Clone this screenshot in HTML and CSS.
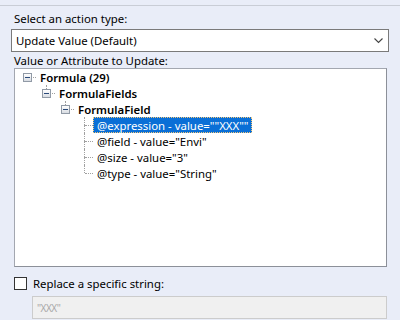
FILE: index.html
```html
<!DOCTYPE html>
<html>
<head>
<meta charset="utf-8">
<link rel="stylesheet" href="styles.css">
</head>
<body>
<div class="topbar"></div>
<div class="panel">
  <div class="label first">Select an action type:</div>
  <div class="select">
    <span class="select-text">Update Value (Default)</span>
    <svg class="chev" width="9" height="6" viewBox="0 0 9 6"><path d="M0.5 0.5 L4.5 4.5 L8.5 0.5" fill="none" stroke="#444" stroke-width="1.1"/></svg>
  </div>
  <div class="label second">Value or Attribute to Update:</div>
  <div class="tree">
    <div class="row lvl0">
      <span class="joint"><span class="hline"></span><span class="exp"><span class="minus"></span></span></span>
      <span class="node bold">Formula (29)</span>
    </div>
    <div class="row lvl1">
      <span class="joint up"><span class="hline"></span><span class="exp"><span class="minus"></span></span></span>
      <span class="node bold">FormulaFields</span>
    </div>
    <div class="row lvl2">
      <span class="joint up"><span class="hline"></span><span class="exp"><span class="minus"></span></span></span>
      <span class="node bold">FormulaField</span>
    </div>
    <div class="row lvl3">
      <span class="joint up down"><span class="hline"></span></span>
      <span class="node selected">@expression - value=""XXX""</span>
    </div>
    <div class="row lvl3">
      <span class="joint up down"><span class="hline"></span></span>
      <span class="node">@field - value="Envi"</span>
    </div>
    <div class="row lvl3">
      <span class="joint up down"><span class="hline"></span></span>
      <span class="node">@size - value="3"</span>
    </div>
    <div class="row lvl3">
      <span class="joint up"><span class="hline"></span></span>
      <span class="node">@type - value="String"</span>
    </div>
  </div>
  <div class="check-row">
    <span class="checkbox"></span>
    <span class="check-label">Replace a specific string:</span>
  </div>
  <div class="input disabled">"XXX"</div>
</div>
</body>
</html>
```
FILE: styles.css
```css
html, body {
  margin: 0;
  padding: 0;
}
body {
  width: 400px;
  height: 320px;
  overflow: hidden;
  background: #e9edf8;
  font-family: "Noto Sans", "Open Sans", sans-serif;
  font-size: 11.4px;
  color: #000;
}
.topbar {
  height: 5px;
  border-bottom: 1px solid #c9cdd6;
}
.panel {
  padding-left: 11px;
  display: flex;
  flex-direction: column;
}
.label {
  line-height: 15px;
  height: 15px;
  padding-left: 3px;
  white-space: nowrap;
}
.label.first {
  margin-top: 5px;
  margin-bottom: 3px;
}
.label.second {
  margin-top: 1px;
}
.select {
  box-sizing: border-box;
  width: 378px;
  height: 23px;
  border: 1px solid #7a7a7a;
  background: #fff;
  display: flex;
  align-items: center;
  justify-content: space-between;
  padding: 0 5px 0 4px;
}
.select-text {
  line-height: 16px;
}
.chev {
  display: block;
  margin-top: 1px;
}
.tree {
  box-sizing: border-box;
  margin-left: 3px;
  width: 373px;
  height: 199px;
  border: 1px solid #a3a7b0;
  border-right-color: #8c9099;
  border-bottom-color: #8c9099;
  background: #fff;
}
.row {
  height: 16px;
  display: flex;
  align-items: center;
  position: relative;
}
.lvl0 { padding-left: 8px; }
.lvl1 { padding-left: 27px; }
.lvl2 { padding-left: 46px; }
.lvl3 { padding-left: 65px; }
.joint {
  position: relative;
  width: 14px;
  height: 16px;
  flex: none;
}
.joint.up::before {
  content: "";
  position: absolute;
  left: 4px;
  top: 0;
  height: 8px;
  border-left: 1px dotted #a0a0a0;
}
.joint.down::after {
  content: "";
  position: absolute;
  left: 4px;
  top: 8px;
  height: 8px;
  border-left: 1px dotted #a0a0a0;
}
.hline {
  position: absolute;
  left: 5px;
  top: 8px;
  width: 8px;
  border-top: 1px dotted #a0a0a0;
}
.exp {
  position: absolute;
  left: 0;
  top: 4px;
  box-sizing: border-box;
  width: 9px;
  height: 9px;
  border: 1px solid #919aa6;
  background: linear-gradient(#ffffff, #d8dce2);
  z-index: 1;
}
.minus {
  position: absolute;
  left: 1px;
  top: 3px;
  width: 5px;
  height: 1px;
  background: #2a4a7a;
}
.node {
  line-height: 15px;
  height: 15px;
  padding: 0 3px;
  white-space: nowrap;
  box-sizing: border-box;
  border: 1px solid transparent;
  margin-left: -1px;
  display: flex;
  align-items: center;
}
.node.bold {
  font-weight: 600;
}
.node.selected {
  background: #0a6fd6;
  color: #fff;
  border: 1px dotted #f4c87a;
  height: 16px;
}
.check-row {
  display: flex;
  align-items: center;
  margin-top: 10px;
  height: 13px;
  padding-left: 3px;
}
.checkbox {
  box-sizing: border-box;
  width: 13px;
  height: 13px;
  border: 1px solid #333;
  background: #fff;
  flex: none;
}
.check-label {
  margin-left: 6px;
  line-height: 15px;
  white-space: nowrap;
}
.input {
  box-sizing: border-box;
  margin-top: 6px;
  margin-left: 21px;
  width: 355px;
  height: 23px;
  border: 1px solid #cccccc;
  background: #f0f0f0;
  color: #a8a8a8;
  font-size: 10px;
  letter-spacing: -0.5px;
  display: flex;
  align-items: center;
  padding-left: 4px;
}
```
